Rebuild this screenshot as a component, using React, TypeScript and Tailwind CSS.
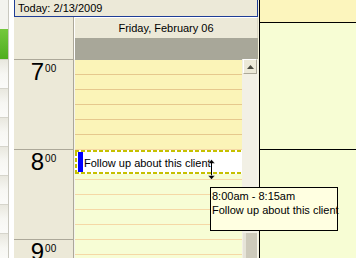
import React from "react"

const font = "font-['Liberation_Sans',Arial,sans-serif]"

const slots = Array.from({ length: 14 }, (_, i) => i)
const hours = ["7", "8", "9"]

function HourLabel({ hour }: { hour: string }) {
  return (
    <div className="flex justify-center items-start text-black">
      <span className="text-[24px] leading-[24px]">{hour}</span>
      <span className="text-[10px] leading-[10px] mt-[4px] ml-[1px]">00</span>
    </div>
  )
}

function Slot({ index }: { index: number }) {
  const work = index >= 6
  let cls = work ? "bg-[#f7fdd5] border-[#f5d8a6]" : "bg-[#fbf4b8] border-[#e6c88d]"
  if (index === 0) cls = "bg-[#fbf4b8] border-[#a8a799]"
  return <div className={`h-[15px] shrink-0 border-t ${cls}`} />
}

function LeftStrip() {
  return (
    <div className="w-[9px] h-full flex flex-col border-r border-[#c9c8bf] bg-[#f4f4ef]">
      <div className="h-[29px] shrink-0 bg-[#f3f3ee]" />
      <div className="h-[30px] shrink-0 bg-gradient-to-b from-[#74c83c] to-[#4fae1e]" />
      {[0, 1, 2, 3, 4, 5, 6].map((i) => (
        <div
          key={i}
          className="h-[29px] shrink-0 border-t border-[#d6d5cc] bg-gradient-to-b from-[#e9e8df] via-[#f7f7f3] to-[#fbfbf9]"
        />
      ))}
    </div>
  )
}

function Event() {
  const dashH = "bg-[repeating-linear-gradient(90deg,#c6c000_0_4px,transparent_4px_6px)]"
  const dashV = "bg-[repeating-linear-gradient(180deg,#c6c000_0_4px,transparent_4px_6px)]"
  return (
    <div className="absolute left-0 right-0 top-[91px] h-[24px] flex flex-col bg-white">
      <div className={`h-[2px] shrink-0 ${dashH}`} />
      <div className="flex flex-1 min-h-0">
        <div className={`w-[2px] shrink-0 ${dashV}`} />
        <div className="flex flex-1 bg-white">
          <div className="w-[5px] ml-[1px] bg-[#0000ff]" />
          <span className="ml-[1px] pt-[4px] text-[11px] leading-[14px] text-black whitespace-nowrap">
            Follow up about this client
          </span>
        </div>
      </div>
      <div className={`h-[2px] shrink-0 ${dashH}`} />
    </div>
  )
}

function Scrollbar() {
  return (
    <div className="w-[15px] h-full flex flex-col bg-[#f2f0e5]">
      <div className="h-[15px] shrink-0 flex items-center justify-center bg-[#ece9d8] border-t border-l border-white border-r border-b border-r-[#aca899] border-b-[#aca899] ml-[1px]">
        <svg width="7" height="4" viewBox="0 0 7 4">
          <polygon points="3.5,0 7,4 0,4" fill="#4a4a40" />
        </svg>
      </div>
      <div className="h-[159px] shrink-0" />
      <div className="flex-1 ml-[1px] bg-[#cdcabb] border-l-[3px] border-[#e6e4d8]" />
    </div>
  )
}

export default function App() {
  return (
    <div className={`relative w-[356px] h-[258px] overflow-hidden flex bg-white ${font}`}>
      <LeftStrip />
      <div className="w-[5px] h-full bg-white" />

      {/* calendar panel */}
      <div className="w-[244px] h-full flex flex-col bg-[#ece9d8]">
        <div className="h-[17px] shrink-0 border-l border-r border-b border-[#1f3d96] pl-[3px] pt-[1px] text-[11px] leading-[14px] text-black">
          Today: 2/13/2009
        </div>
        <div className="h-[42px] shrink-0 flex">
          <div className="w-[60px] border-r border-[#aca899]" />
          <div className="flex-1 flex flex-col border-l border-white">
            <div className="h-[21px] shrink-0 flex items-center justify-center border-t border-white border-r border-r-[#d8d5c5] text-[11px] leading-[14px] text-black">
              Friday, February 06
            </div>
            <div className="flex-1 bg-[#a8a799]" />
          </div>
        </div>
        <div className="flex-1 min-h-0 flex">
          <div className="w-[60px] border-r border-[#aca899] flex flex-col">
            {hours.map((h) => (
              <div key={h} className="h-[90px] shrink-0 border-t border-[#aca899]">
                <HourLabel hour={h} />
              </div>
            ))}
          </div>
          <div className="w-px bg-[#f4f3ec]" />
          <div className="relative w-[167px] flex flex-col">
            {slots.map((i) => (
              <Slot key={i} index={i} />
            ))}
            <Event />
          </div>
          <Scrollbar />
          <div className="w-px bg-[#f4f3ec]" />
        </div>
      </div>

      <div className="w-px h-full bg-[#f6f3dc]" />
      <div className="w-px h-full bg-black" />

      {/* next day column */}
      <div className="flex-1 h-full flex flex-col bg-[#f7fdd4]">
        <div className="h-[23px] shrink-0 bg-[#fcf5bd] border-b border-black" />
        <div className="h-[127px] shrink-0 border-b border-black" />
      </div>

      {/* resize cursor */}
      <svg className="absolute left-[207px] top-[159px]" width="9" height="21" viewBox="0 0 9 21">
        <polygon points="4.5,0.5 8,4.5 1,4.5" fill="black" stroke="white" strokeWidth="0.5" />
        <rect x="4" y="4" width="1" height="13" fill="black" />
        <polygon points="4.5,20.5 8,16.5 1,16.5" fill="black" stroke="white" strokeWidth="0.5" />
      </svg>

      {/* tooltip */}
      <div className="absolute left-[210px] top-[187px] w-[128px] h-[44px] bg-[#ffffe1] border border-black pl-[1px] pt-[1px] text-[11px] leading-[14px] text-black whitespace-nowrap">
        <div>8:00am - 8:15am</div>
        <div>Follow up about this client</div>
      </div>
    </div>
  )
}
